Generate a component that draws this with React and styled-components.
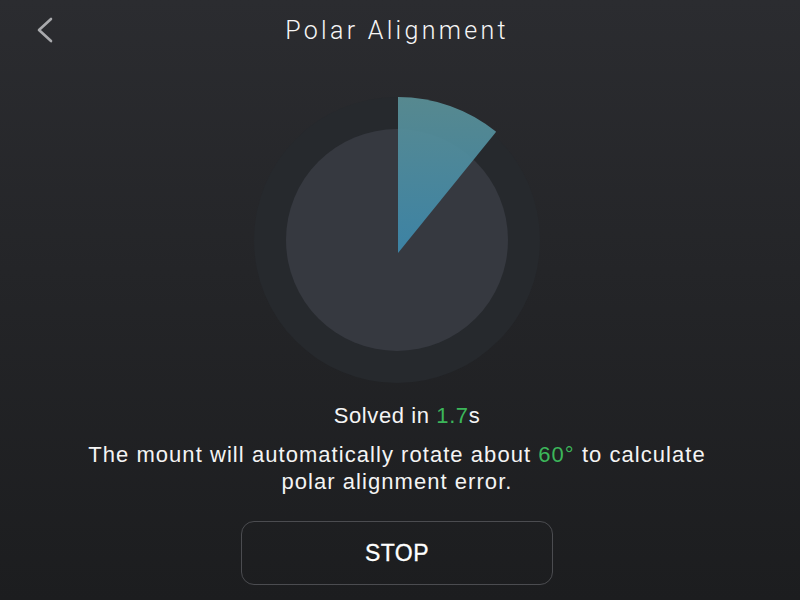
import React from 'react'
import styled, { createGlobalStyle } from 'styled-components'

const GlobalStyle = createGlobalStyle`
  html, body {
    margin: 0;
    padding: 0;
    background: #1c1d1f;
  }
  * {
    box-sizing: border-box;
  }
`

const Screen = styled.div`
  width: 800px;
  height: 600px;
  padding-right: 6px;
  display: flex;
  flex-direction: column;
  align-items: center;
  overflow: hidden;
  background: linear-gradient(180deg, #2b2c30 0%, #242528 45%, #1c1d1f 100%);
  font-family: "Liberation Sans", Arial, sans-serif;
  color: #f4f4f4;
`

const Header = styled.header`
  position: relative;
  width: 100%;
  height: 60px;
  display: flex;
  align-items: center;
  justify-content: center;
`

const BackButton = styled.button`
  position: absolute;
  left: 30px;
  top: 14px;
  width: 30px;
  height: 32px;
  padding: 0;
  border: none;
  background: none;
  display: flex;
  align-items: center;
  justify-content: center;
  cursor: pointer;
`

const Title = styled.h1`
  margin: 0;
  font-family: Roboto, "Liberation Sans", sans-serif;
  font-size: 25px;
  font-weight: 300;
  letter-spacing: 3.3px;
  color: #f6f6f6;
`

const Dial = styled.div`
  margin-top: 30px;
  width: 300px;
  height: 300px;
`

const Status = styled.p`
  margin: 13px 0 0;
  padding-left: 20px;
  font-size: 22px;
  line-height: 26px;
  letter-spacing: 0.6px;
`

const Description = styled.p`
  margin: 12px 0 0;
  max-width: 640px;
  text-align: center;
  font-size: 22px;
  line-height: 27px;
  letter-spacing: 1.05px;
`

const Highlight = styled.span`
  color: #3cb65a;
`

const StopButton = styled.button`
  margin-top: 26px;
  width: 312px;
  height: 64px;
  border: 1.5px solid #4b4c50;
  border-radius: 13px;
  background: transparent;
  color: #ffffff;
  font-family: "Liberation Sans", Arial, sans-serif;
  font-size: 23px;
  font-weight: 400;
  letter-spacing: 0.5px;
  -webkit-text-stroke: 0.3px #ffffff;
  cursor: pointer;
`

// pie wedge from the top, sweeping clockwise by `deg`
const wedgePath = (cx, cy, r, deg) => {
  const a = (deg * Math.PI) / 180
  const x = cx + r * Math.sin(a)
  const y = cy - r * Math.cos(a)
  return `M ${cx} ${cy} L ${cx} ${cy - r} A ${r} ${r} 0 0 1 ${x.toFixed(2)} ${y.toFixed(2)} Z`
}

const ProgressDial = ({ sweep }) => (
  <svg width="300" height="300" viewBox="0 0 300 300">
    <defs>
      <linearGradient id="wedgeFill" x1="0" y1="0" x2="0" y2="1">
        <stop offset="0" stopColor="#5b9198" />
        <stop offset="1" stopColor="#3d89ad" />
      </linearGradient>
    </defs>
    <circle cx="150" cy="150" r="143" fill="#26292d" />
    <circle cx="150" cy="150" r="111" fill="#363940" />
    <path d={wedgePath(151, 163, 156, sweep)} fill="url(#wedgeFill)" opacity="0.92" />
  </svg>
)

export default function App() {
  return (
    <>
      <GlobalStyle />
      <Screen>
        <Header>
          <BackButton aria-label="Back">
            <svg width="20" height="28" viewBox="0 0 20 28">
              <path d="M16 3 L4 14 L16 25" fill="none" stroke="#a9aaad" strokeWidth="2.6" strokeLinecap="round" strokeLinejoin="round" />
            </svg>
          </BackButton>
          <Title>Polar Alignment</Title>
        </Header>
        <Dial>
          <ProgressDial sweep={39} />
        </Dial>
        <Status>
          Solved in <Highlight>1.7</Highlight>s
        </Status>
        <Description>
          The mount will automatically rotate about <Highlight>60°</Highlight> to calculate polar alignment error.
        </Description>
        <StopButton>STOP</StopButton>
      </Screen>
    </>
  )
}
